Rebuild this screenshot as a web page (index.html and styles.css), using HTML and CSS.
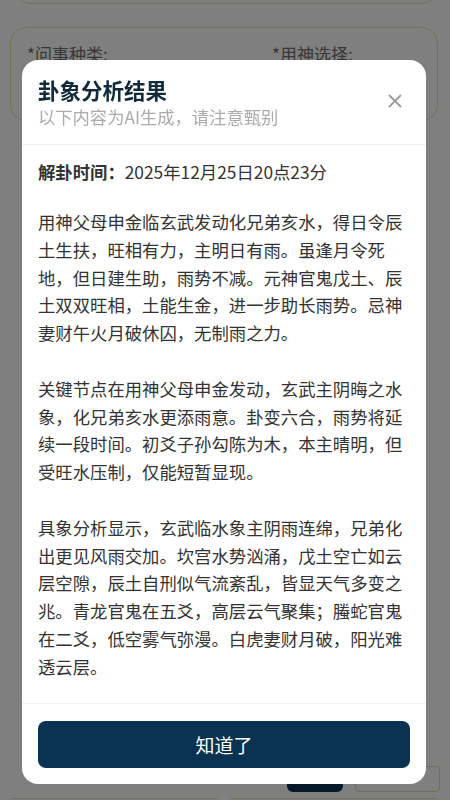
FILE: index.html
```html
<!DOCTYPE html>
<html lang="zh-CN">
<head>
<meta charset="utf-8">
<title>卦象分析结果</title>
<link rel="stylesheet" href="styles.css">
</head>
<body>
<div class="page">
  <div class="card card-top"></div>
  <div class="card card-form">
    <div class="field field-first"><span class="req">*</span>问事种类:</div>
    <div class="field"><span class="req">*</span>用神选择:</div>
  </div>
  <div class="spacer"></div>
  <div class="actions">
    <div class="btn-dark"></div>
    <div class="btn-outline"></div>
  </div>
  <div class="row">
    <div class="card card-half"></div>
    <div class="card card-half"></div>
  </div>
</div>

<div class="mask">
  <div class="modal">
    <div class="modal-head">
      <div class="modal-title">卦象分析结果</div>
      <div class="modal-sub">以下内容为AI生成，请注意甄别</div>
      <div class="close" aria-label="关闭">
        <svg viewBox="0 0 14 14" width="14" height="14"><path d="M1.5 1.5 L12.5 12.5 M12.5 1.5 L1.5 12.5" stroke="#9a9a9a" stroke-width="1.8" stroke-linecap="round" fill="none"/></svg>
      </div>
    </div>
    <div class="modal-body">
      <div class="time"><b>解卦时间：</b>2025年12月25日20点23分</div>
      <div class="content">用神父母申金临玄武发动化兄弟亥水，得日令辰土生扶，旺相有力，主明日有雨。虽逢月令死地，但日建生助，雨势不减。元神官鬼戊土、辰土双双旺相，土能生金，进一步助长雨势。忌神妻财午火月破休囚，无制雨之力。

关键节点在用神父母申金发动，玄武主阴晦之水象，化兄弟亥水更添雨意。卦变六合，雨势将延续一段时间。初爻子孙勾陈为木，本主晴明，但受旺水压制，仅能短暂显现。

具象分析显示，玄武临水象主阴雨连绵，兄弟化出更见风雨交加。坎宫水势汹涌，戊土空亡如云层空隙，辰土自刑似气流紊乱，皆显天气多变之兆。青龙官鬼在五爻，高层云气聚集；螣蛇官鬼在二爻，低空雾气弥漫。白虎妻财月破，阳光难透云层。</div>
    </div>
    <div class="modal-foot">
      <button class="ok">知道了</button>
    </div>
  </div>
</div>
</body>
</html>
```

FILE: styles.css
```css
* { box-sizing: border-box; }
html, body { margin: 0; padding: 0; }
body {
  width: 450px;
  height: 800px;
  overflow: hidden;
  background: #ffffff;
  font-family: "Noto Sans CJK SC", "Noto Sans", sans-serif;
}
.page {
  height: 800px;
  display: flex;
  flex-direction: column;
  padding: 0 12px 0 10px;
}
.card {
  border: 1px solid #efdfa8;
  border-radius: 16px;
  background: #ffffff;
}
.card-top {
  height: 40px;
  margin-top: -36px;
  margin-left: 4px;
  flex-shrink: 0;
}
.card-form {
  margin-top: 23px;
  height: 94px;
  flex-shrink: 0;
  display: flex;
  padding: 14px 16px;
}
.field {
  font-size: 17px;
  line-height: 24px;
  color: #707070;
  white-space: nowrap;
}
.field-first {
  width: 245px;
  flex-shrink: 0;
}
.req { color: #707070; }
.spacer { flex: 1; }
.actions {
  display: flex;
  justify-content: flex-end;
  align-items: flex-end;
  gap: 12px;
  margin-right: -2px;
  flex-shrink: 0;
}
.btn-dark {
  width: 56px;
  height: 30px;
  background: #0b3350;
  border-radius: 6px;
}
.btn-outline {
  width: 85px;
  height: 26px;
  border: 1px solid #e8d9a6;
  border-radius: 4px;
}
.row {
  display: flex;
  gap: 8px;
  margin-top: 6px;
  margin-left: -2px;
  margin-right: -2px;
  height: 2px;
  flex-shrink: 0;
}
.card-half { flex: 1; border-radius: 6px; height: 20px; }

.mask {
  position: fixed;
  inset: 0;
  background: rgba(0, 0, 0, 0.5);
  padding: 60px 24px 16px 22px;
}
.modal {
  width: 404px;
  height: 724px;
  background: #ffffff;
  border-radius: 16px;
  display: flex;
  flex-direction: column;
  overflow: hidden;
}
.modal-head {
  position: relative;
  padding: 16px 16px 14px;
  border-bottom: 1px solid #f1f1f1;
}
.modal-title {
  font-size: 21.5px;
  line-height: 28px;
  font-weight: 700;
  color: #112b3c;
}
.modal-sub {
  font-size: 17.3px;
  line-height: 26px;
  color: #ababab;
}
.close {
  position: absolute;
  right: 24px;
  top: 34px;
  width: 14px;
  height: 14px;
  display: flex;
}
.modal-body {
  flex: 1;
  overflow: hidden;
  padding: 13px 16px 0;
  color: #333333;
  font-size: 17.35px;
}
.time {
  line-height: 28px;
  margin-bottom: 22px;
}
.time b { font-weight: 700; }
.content {
  white-space: pre-wrap;
  line-height: 27.8px;
}
.modal-foot {
  border-top: 1px solid #f2f2f2;
  padding: 17px 16px 16px;
}
.ok {
  display: block;
  width: 100%;
  height: 47px;
  border: none;
  border-radius: 8px;
  background: #0a3352;
  color: #ffffff;
  font-family: "Noto Sans CJK SC", "Noto Sans", sans-serif;
  font-size: 19px;
}
```
